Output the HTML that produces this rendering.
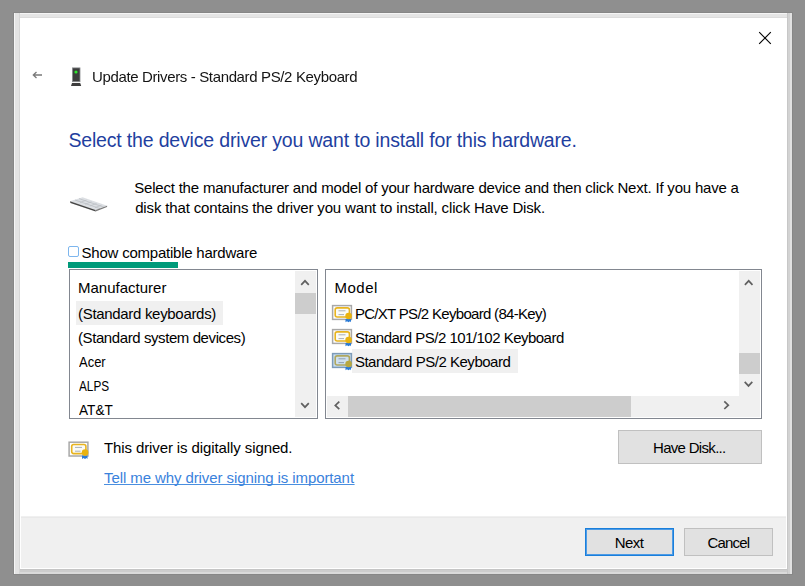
<!DOCTYPE html>
<html><head><meta charset="utf-8"><style>
html,body{margin:0;padding:0;width:805px;height:586px;overflow:hidden;background:#8f8f8f;font-family:"Liberation Sans",sans-serif}
.a{position:absolute}
.t{position:absolute;white-space:nowrap;line-height:normal;font-family:"Liberation Sans",sans-serif}
</style></head><body>
<div class="a" style="left:13px;top:12px;width:780px;height:563px;background:#878787"></div>
<div class="a" style="left:14px;top:13px;width:6px;height:561px;background:linear-gradient(to right,#f5f5f5 0,#f5f5f5 1px,#e3e3e3 1px,#e3e3e3 5px,#d6d6d6 5px)"></div>
<div class="a" style="left:20px;top:13px;width:767px;height:5px;background:linear-gradient(to bottom,#f5f5f5 0,#f5f5f5 1px,#e5e5e5 1px,#e5e5e5 4px,#dcdcdc 4px)"></div>
<div class="a" style="left:787px;top:13px;width:5px;height:561px;background:linear-gradient(to right,#c7c7c7 0,#c7c7c7 1px,#d2d2d2 1px,#d2d2d2 3px,#e2e2e2 3px)"></div>
<div class="a" style="left:20px;top:569px;width:767px;height:5px;background:linear-gradient(to bottom,#c5c5c5 0,#c5c5c5 1px,#cdcdcd 1px,#cdcdcd 3px,#dadada 3px)"></div>
<div class="a" style="left:20px;top:18px;width:767px;height:551px;background:#fff"></div>
<div class="a" style="left:21px;top:516px;width:765px;height:52px;background:#f0f0f0"></div>
<div class="a" style="left:21px;top:517px;width:765px;height:1px;background:#e9e9e9"></div>
<!-- left listbox -->
<div class="a" style="left:69px;top:269px;width:247px;height:148px;border:1px solid #828790;background:#fff"></div>
<div class="a" style="left:76px;top:301px;width:147px;height:24px;background:#f0f0f0"></div>
<div class="a" style="left:295px;top:271px;width:21px;height:146px;background:#f0f0f0"></div>
<div class="a" style="left:295px;top:293px;width:21px;height:21px;background:#cdcdcd"></div>
<!-- right listbox -->
<div class="a" style="left:325px;top:269px;width:435px;height:148px;border:1px solid #828790;background:#fff"></div>
<div class="a" style="left:352px;top:349px;width:166px;height:24px;background:#f0f0f0"></div>
<div class="a" style="left:739px;top:271px;width:21px;height:146px;background:#f0f0f0"></div>
<div class="a" style="left:327px;top:396px;width:433px;height:21px;background:#f0f0f0"></div>
<div class="a" style="left:739px;top:353px;width:21px;height:21px;background:#cdcdcd"></div>
<div class="a" style="left:348px;top:396px;width:283px;height:21px;background:#cdcdcd"></div>
<!-- checkbox & green bar -->
<div class="a" style="left:68px;top:246px;width:9px;height:9px;border:1px solid #7db6ee;border-radius:2px;background:#fff"></div>
<div class="a" style="left:68px;top:262px;width:110px;height:6px;background:#009a7a"></div>
<!-- buttons -->
<div class="a" style="left:618px;top:430px;width:142px;height:32px;border:1px solid #c0c0c0;background:#e1e1e1"></div>
<div class="a" style="left:585px;top:528px;width:87px;height:26px;border:1px solid #1a7fdb;box-shadow:inset 0 0 0 1px #4d9be6;background:#e1e1e1"></div>
<div class="a" style="left:684px;top:528px;width:87px;height:26px;border:1px solid #c0c0c0;background:#e1e1e1"></div>
<svg class="a" style="left:0;top:0" width="805" height="586" viewBox="0 0 805 586">
<!-- close X -->
<line x1="759.2" y1="32.2" x2="770.8" y2="43.8" stroke="#000" stroke-width="1.15"/>
<line x1="770.8" y1="32.2" x2="759.2" y2="43.8" stroke="#000" stroke-width="1.15"/>
<!-- back arrow -->
<path d="M36.5 72 L33.3 75 L36.5 78 M33.5 75 L42 75" fill="none" stroke="#7a7a7a" stroke-width="1.3"/>
<!-- tower icon -->
<rect x="72.4" y="67.9" width="7.6" height="13.8" fill="#3d3d3d" stroke="#8a8d90" stroke-width="0.8"/>
<path d="M72 83 L80.2 83 L81.2 86 L71 86 Z" fill="#3d3d3d"/>
<circle cx="76" cy="72" r="1.6" fill="#2ee82e"/>
<!-- keyboard icon -->
<path d="M70 201.2 L82.6 197.2 L107.2 205.8 L95.6 210 Z" fill="#dcdfe3"/>
<path d="M75 200 L100 208.6 M79 198.6 L104 207.2 M80 202.5 L86.5 200.1 M85 204.2 L91.5 201.8 M90 205.9 L96.5 203.5 M95 207.6 L101.5 205.2" stroke="#bcc0c5" stroke-width="0.8" fill="none"/>
<path d="M70 201.2 L95.6 210 L95.6 211.4 L70.4 202.9 Z" fill="#474747"/>
<path d="M95.6 210 L107.2 205.8 L107 206.9 L95.6 211.4 Z" fill="#7a7a7a"/>
<polyline points="301.2,284.8 305,280.8 308.8,284.8" fill="none" stroke="#606060" stroke-width="1.7"/>
<polyline points="301.2,403.2 305,407.2 308.8,403.2" fill="none" stroke="#606060" stroke-width="1.7"/>
<polyline points="744.9000000000001,284.8 748.7,280.8 752.5,284.8" fill="none" stroke="#606060" stroke-width="1.7"/>
<polyline points="744.7,381.9 748.5,385.9 752.3,381.9" fill="none" stroke="#606060" stroke-width="1.7"/>
<polyline points="339.3,401.59999999999997 335.3,405.4 339.3,409.2" fill="none" stroke="#606060" stroke-width="1.7"/>
<polyline points="724.3000000000001,401.4 728.3000000000001,405.2 724.3000000000001,409.0" fill="none" stroke="#606060" stroke-width="1.7"/>
<g transform="translate(332,305)">
<rect x="0.6" y="0.6" width="18.8" height="13.8" fill="#fff" stroke="#a8a8a8" stroke-width="1.5"/>
<rect x="3.2" y="2.9" width="14.2" height="9.1" rx="2" fill="#fbfbf6" stroke="#e8b420" stroke-width="1.6"/>
<line x1="6.5" y1="5.8" x2="13.5" y2="5.8" stroke="#a9b0b8" stroke-width="1"/>
<line x1="6.5" y1="9.6" x2="12" y2="9.6" stroke="#a9b0b8" stroke-width="1"/>
<path d="M13.5 14 L13.5 17.3 L15 16.3 L16.5 17.3 L18 16.3 L19 17.3 L19 14 Z" fill="#2b7bd6"/>
<circle cx="16.6" cy="11" r="3.3" fill="#e9b310"/>
</g>
<g transform="translate(332,329)">
<rect x="0.6" y="0.6" width="18.8" height="13.8" fill="#fff" stroke="#a8a8a8" stroke-width="1.5"/>
<rect x="3.2" y="2.9" width="14.2" height="9.1" rx="2" fill="#fbfbf6" stroke="#e8b420" stroke-width="1.6"/>
<line x1="6.5" y1="5.8" x2="13.5" y2="5.8" stroke="#a9b0b8" stroke-width="1"/>
<line x1="6.5" y1="9.6" x2="12" y2="9.6" stroke="#a9b0b8" stroke-width="1"/>
<path d="M13.5 14 L13.5 17.3 L15 16.3 L16.5 17.3 L18 16.3 L19 17.3 L19 14 Z" fill="#2b7bd6"/>
<circle cx="16.6" cy="11" r="3.3" fill="#e9b310"/>
</g>
<g transform="translate(332,353)">
<rect x="0.6" y="0.6" width="18.8" height="13.8" fill="#c9dff2" stroke="#7d9bb8" stroke-width="1.5"/>
<rect x="3.2" y="2.9" width="14.2" height="9.1" rx="2" fill="#cfe0ee" stroke="#b0a860" stroke-width="1.6"/>
<line x1="6.5" y1="5.8" x2="13.5" y2="5.8" stroke="#8fa0b0" stroke-width="1"/>
<line x1="6.5" y1="9.6" x2="12" y2="9.6" stroke="#8fa0b0" stroke-width="1"/>
<path d="M13.5 14 L13.5 17.3 L15 16.3 L16.5 17.3 L18 16.3 L19 17.3 L19 14 Z" fill="#2b7bd6"/>
<circle cx="16.6" cy="11" r="3.3" fill="#b8a840"/>
</g>
<g transform="translate(68.5,441.6)">
<rect x="0.6" y="0.6" width="18.8" height="13.8" fill="#fff" stroke="#a8a8a8" stroke-width="1.5"/>
<rect x="3.2" y="2.9" width="14.2" height="9.1" rx="2" fill="#fbfbf6" stroke="#e8b420" stroke-width="1.6"/>
<line x1="6.5" y1="5.8" x2="13.5" y2="5.8" stroke="#a9b0b8" stroke-width="1"/>
<line x1="6.5" y1="9.6" x2="12" y2="9.6" stroke="#a9b0b8" stroke-width="1"/>
<path d="M13.5 14 L13.5 17.3 L15 16.3 L16.5 17.3 L18 16.3 L19 17.3 L19 14 Z" fill="#2b7bd6"/>
<circle cx="16.6" cy="11" r="3.3" fill="#e9b310"/>
</g>
<line x1="104" y1="484.5" x2="354.6" y2="484.5" stroke="#4a8fe0" stroke-width="1"/>
</svg>
<span class="t" style="left:92.00px;top:68px;font-size:15px;letter-spacing:-0.361px;color:#141414;will-change:transform">Update Drivers - Standard PS/2 Keyboard</span>
<span class="t" style="left:68.40px;top:129px;font-size:19.5px;letter-spacing:-0.171px;color:#1f3fa0;">Select the device driver you want to install for this hardware.</span>
<span class="t" style="left:134.20px;top:179px;font-size:15px;letter-spacing:-0.199px;color:#000;">Select the manufacturer and model of your hardware device and then click Next. If you have a</span>
<span class="t" style="left:135.20px;top:199px;font-size:15px;letter-spacing:-0.155px;color:#000;">disk that contains the driver you want to install, click Have Disk.</span>
<span class="t" style="left:81.60px;top:244px;font-size:15px;letter-spacing:-0.230px;color:#000;">Show compatible hardware</span>
<span class="t" style="left:78.00px;top:279px;font-size:15px;letter-spacing:0.000px;color:#000;">Manufacturer</span>
<span class="t" style="left:78.00px;top:305px;font-size:15px;letter-spacing:-0.311px;color:#000;">(Standard keyboards)</span>
<span class="t" style="left:78.00px;top:329px;font-size:15px;letter-spacing:-0.413px;color:#000;">(Standard system devices)</span>
<span class="t" style="left:78.80px;top:353px;font-size:15px;transform:scaleX(0.8645);transform-origin:0 0;color:#000;">Acer</span>
<span class="t" style="left:78.80px;top:377px;font-size:15px;transform:scaleX(0.7842);transform-origin:0 0;color:#000;">ALPS</span>
<span class="t" style="left:78.80px;top:401px;font-size:15px;transform:scaleX(0.9081);transform-origin:0 0;color:#000;">AT&amp;T</span>
<span class="t" style="left:334.50px;top:279px;font-size:15px;letter-spacing:0.500px;color:#000;">Model</span>
<span class="t" style="left:354.90px;top:305px;font-size:15px;letter-spacing:-0.696px;color:#000;">PC/XT PS/2 Keyboard (84-Key)</span>
<span class="t" style="left:354.90px;top:329px;font-size:15px;letter-spacing:-0.517px;color:#000;">Standard PS/2 101/102 Keyboard</span>
<span class="t" style="left:354.90px;top:353px;font-size:15px;letter-spacing:-0.476px;color:#000;">Standard PS/2 Keyboard</span>
<span class="t" style="left:103.90px;top:439px;font-size:15px;letter-spacing:-0.100px;color:#000;">This driver is digitally signed.</span>
<span class="t" style="left:104.00px;top:469px;font-size:15px;letter-spacing:-0.089px;color:#3a82dc;">Tell me why driver signing is important</span>
<span class="t" style="left:653.00px;top:439px;font-size:15px;letter-spacing:-0.691px;color:#000;">Have Disk...</span>
<span class="t" style="left:614.70px;top:534px;font-size:15px;letter-spacing:-0.500px;color:#000;">Next</span>
<span class="t" style="left:707.60px;top:534px;font-size:15px;letter-spacing:-0.860px;color:#000;">Cancel</span>
</body></html>
